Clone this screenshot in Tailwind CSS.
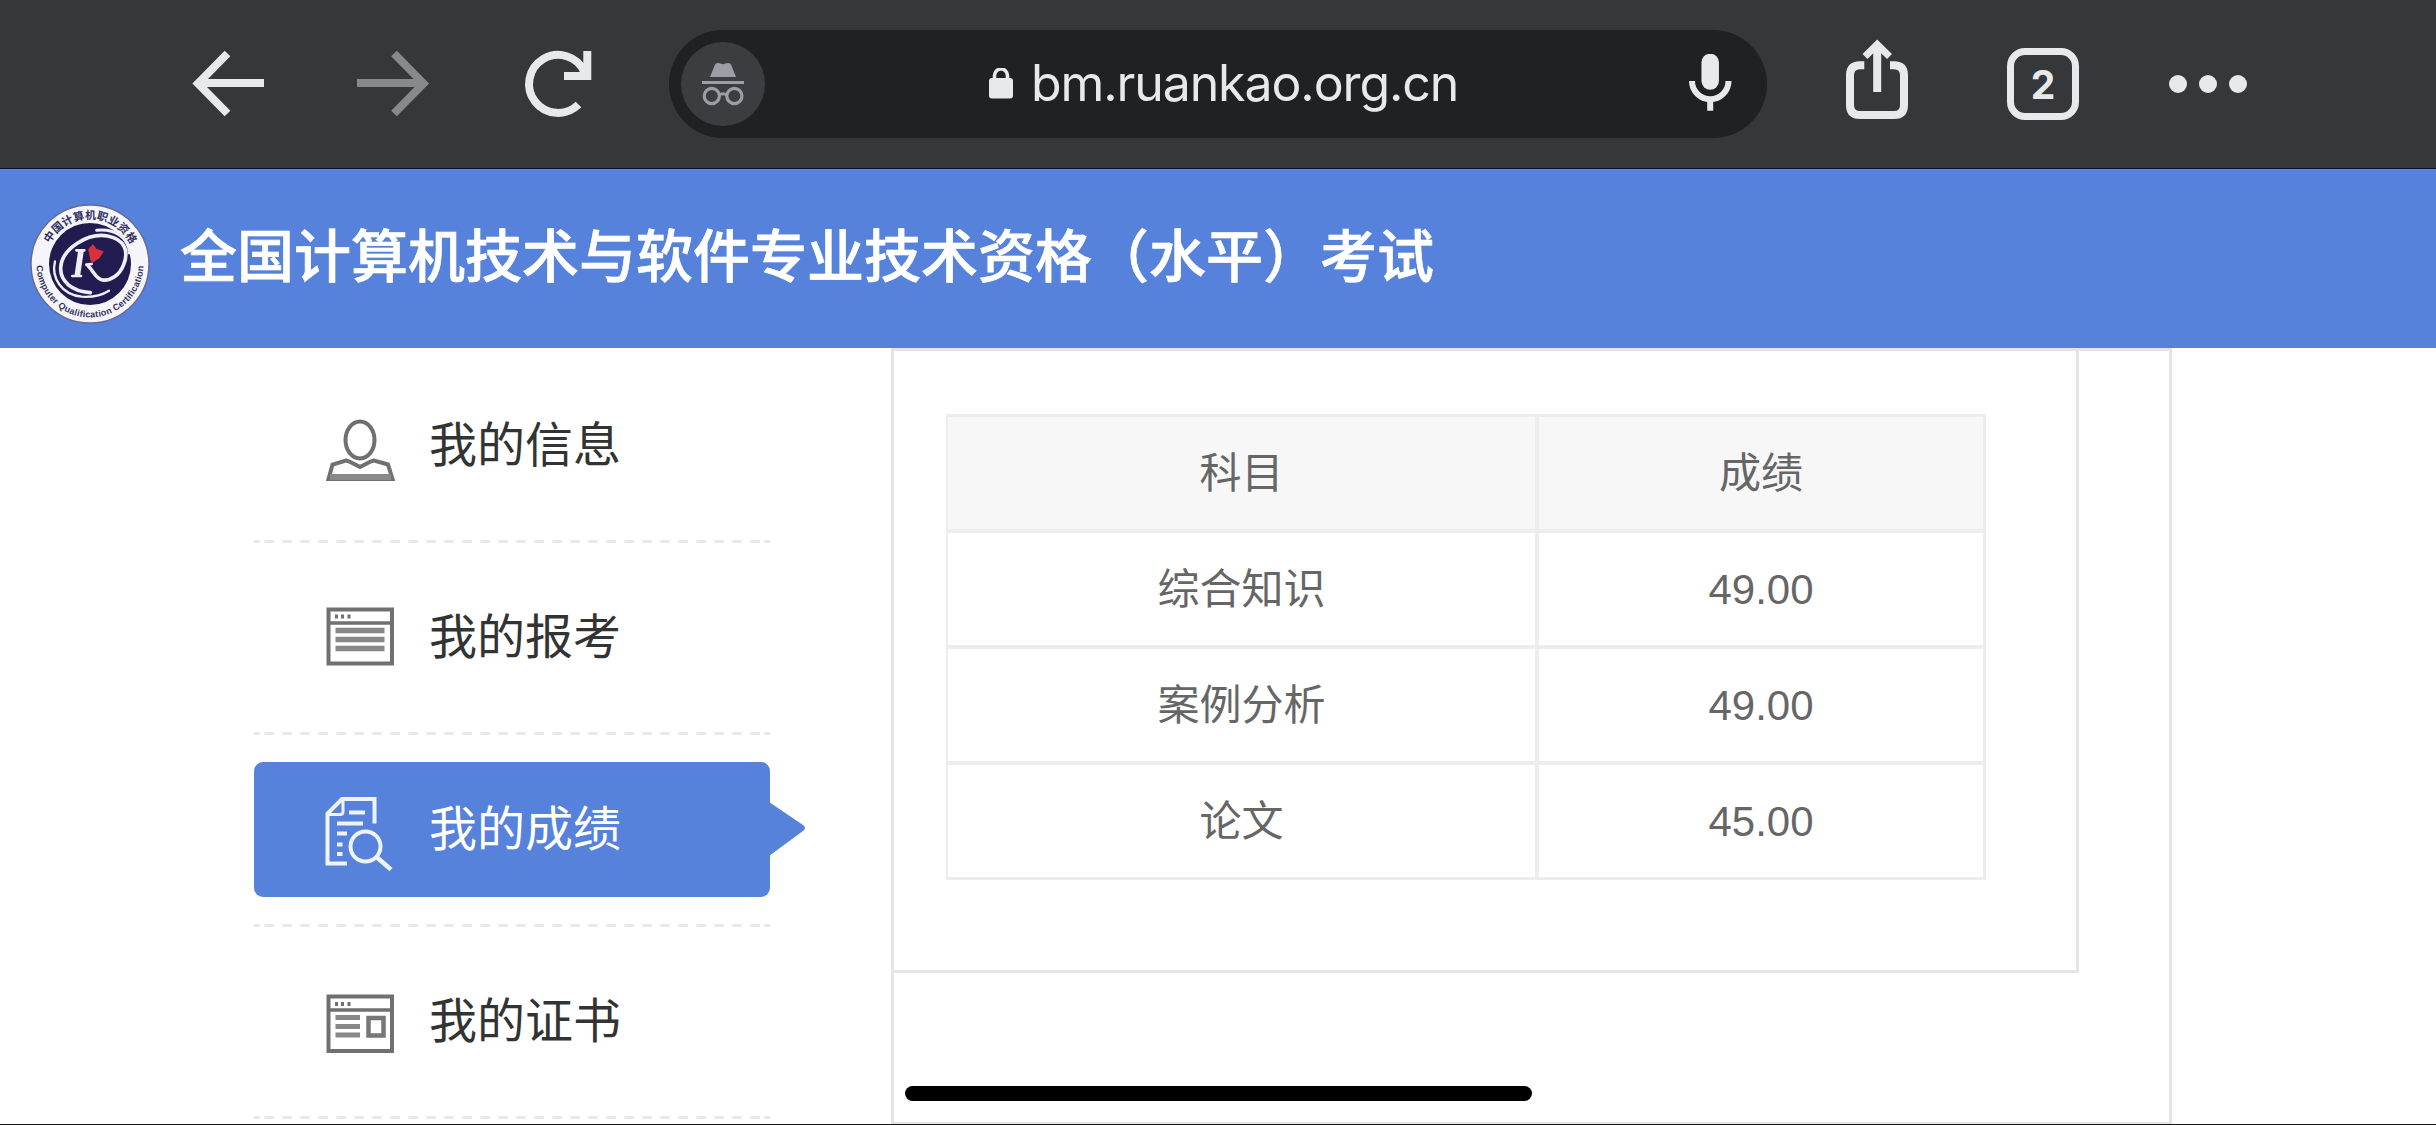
<!DOCTYPE html>
<html lang="zh-CN">
<head>
<meta charset="utf-8">
<title>我的成绩</title>
<script src="https://cdn.jsdelivr.net/npm/@tailwindcss/browser@4"></script>
</head>
<body class="w-[2436px] h-[1125px] overflow-hidden bg-white font-['Liberation_Sans','Noto_Sans_CJK_SC',sans-serif]">
<div class="relative flex h-[1125px] flex-col border-b border-[#161616]">

  <!-- browser toolbar -->
  <div class="flex h-[169px] shrink-0 items-start border-b border-[#0a1030] bg-[#36373a] text-[#e8e9ed]">
    <svg class="ml-[188px] mt-[44px] h-20 w-20" viewBox="188 44 80 80" fill="none" stroke="currentColor" stroke-width="8"><path d="M264 83H198M227.500 53.500L198 83.500L227.500 113.500"/></svg>
    <svg class="ml-[84px] mt-[44px] h-20 w-20 text-[#88898c]" viewBox="352 44 80 80" fill="none" stroke="currentColor" stroke-width="8"><path d="M357 83H423.500M394 53.500L423.500 83.500L394 113.500"/></svg>
    <svg class="ml-[88px] mt-[44px] h-20 w-20" viewBox="520 44 80 80" fill="none" stroke="currentColor" stroke-width="8"><path d="M578.500 104.500A29 29 0 1 1 584.500 72"/><path d="M587.300 51V76H564"/></svg>

    <div class="ml-[69px] mt-[30px] flex h-[108px] w-[1098px] items-center rounded-full bg-[#202124]">
      <div class="ml-3 flex size-[84px] items-center justify-center rounded-full bg-[#3c3d40] text-[#9b9ea4]">
        <svg class="size-[84px]" viewBox="681 42 84 84" fill="currentColor"><path d="M710 77L715 64.500Q716 62.500 718.500 63L723 64.300L727.500 63Q730 62.500 731 64.500L736 77Z"/><path d="M702 81H744V84H702Z"/><g fill="none" stroke="currentColor" stroke-width="3.200"><circle cx="711.800" cy="96" r="7.600"/><circle cx="734.400" cy="96" r="7.600"/><path d="M719 95Q723 92.500 727 95"/></g></svg>
      </div>
      <svg class="ml-[221px] h-8 w-7" viewBox="986 67 28 32"><rect x="989" y="77" width="24" height="20.500" rx="3" fill="currentColor"/><path d="M994.500 79V74.500A6.500 6.500 0 0 1 1007.500 74.500V79" fill="none" stroke="currentColor" stroke-width="3.600"/></svg>
      <div class="mb-[3px] ml-[17px] w-[440px] whitespace-nowrap font-['Inter',sans-serif] text-[50px] leading-[60px] tracking-[-1.1px]">bm.ruankao.org.cn</div>
      <svg class="ml-[215px] h-[60px] w-12" viewBox="1686 54 48 60" fill="none" stroke="currentColor"><path d="M1710.200 62.500V81" stroke-width="17.500" stroke-linecap="round"/><path d="M1692 81A18 18 0 0 0 1728.500 81M1710.200 99V110.700" stroke-width="6"/></svg>
    </div>

    <svg class="ml-[75px] mt-[36px] h-[88px] w-[70px]" viewBox="1842 36 70 88" fill="none" stroke="currentColor" stroke-width="8"><path d="M1864.300 65.300H1860Q1850 65.300 1850 75.300V105Q1850 115 1860 115H1894Q1904 115 1904 105V75.300Q1904 65.300 1894 65.300H1890M1877.200 92V44"/><path d="M1865 56.500L1877.200 44.500L1889.500 56.500" stroke-width="7"/></svg>
    <div class="ml-[95px] mt-[48px] flex size-[72px] items-center justify-center rounded-[18px] border-[7.5px] border-current font-['Inter',sans-serif] text-[39px] font-bold leading-none">2</div>
    <div class="ml-[90px] mt-[75px] flex gap-3">
      <i class="size-[18px] rounded-full bg-current"></i><i class="size-[18px] rounded-full bg-current"></i><i class="size-[18px] rounded-full bg-current"></i>
    </div>
  </div>

  <!-- site header -->
  <header class="flex h-[179px] shrink-0 items-start border-t border-[#6a86cf] bg-[#5782db]">
    <svg class="ml-[30px] mt-[33px] size-[122px]" viewBox="30 203 122 122">
      <defs><path id="arcTop" d="M45 264A45 45 0 0 1 135 264"/><path id="arcBottom" d="M36.500 264A53.500 53.500 0 0 0 143.500 264"/></defs>
      <circle cx="90" cy="264" r="59" fill="#f6f6fa" stroke="#686a96" stroke-width="1.500"/>
      <circle cx="90" cy="264" r="41" fill="#211c50"/>
      <text class="font-['Noto_Sans_CJK_SC',sans-serif] font-bold" font-size="11" fill="#33305f"><textPath href="#arcTop" startOffset="15%" textLength="100">中国计算机职业资格</textPath></text>
      <text class="font-['Liberation_Sans',sans-serif] font-bold" font-size="9" fill="#33305f"><textPath href="#arcBottom" startOffset="1%" textLength="164">Computer Qualification Certification</textPath></text>
      <g transform="translate(25 198) scale(.3333)" fill="none" stroke="#eeeef6" stroke-linecap="round">
        <path d="M196 284C140 280 106 250 107 210C110 150 190 104 248 114C300 124 312 160 296 200C284 232 256 250 232 246C212 242 206 220 190 204" stroke-width="11"/>
        <path d="M215 97C270 92 312 118 313 165" stroke-width="9"/>
        <path d="M90 190C78 240 110 290 170 296C200 298 230 292 252 278" stroke-width="7"/>
        <path d="M168 158L157 232" stroke-width="17" stroke-linecap="butt"/>
        <path d="M154 157H178M142 234H168" stroke-width="8"/>
        <path d="M184 200L200 198" stroke-width="8"/>
        <path d="M190 153L204 138L214 152L236 160L224 180L200 196L194 178Z" fill="#d8303c" stroke="none"/>
      </g>
    </svg>
    <h1 class="ml-[28px] mt-[40px] whitespace-nowrap font-['Noto_Sans_CJK_SC',sans-serif] text-[57px] font-medium leading-[84px] text-white [-webkit-text-stroke:0.7px_white]">全国计算机技术与软件专业技术资格（水平）考试</h1>
  </header>

  <main class="flex min-h-0 grow">
    <!-- side menu -->
    <nav class="ml-[254px] flex w-[516px] flex-col text-[48px] text-[#333]">
      <a class="flex h-[195px] shrink-0 flex-col">
        <span class="mt-[30px] flex h-[135px] items-center">
          <svg class="ml-[66px] h-[84px] w-20" viewBox="320 403.500 80 84" fill="none" stroke="#707070" stroke-width="4"><ellipse cx="360" cy="439.500" rx="14.500" ry="18.500"/><path d="M328.500 478.500L332.500 464L346 460Q349 460.500 360 466.500Q371 460.500 374 460L388 464L392.500 478.500Z"/><path d="M330 476.500H391" stroke="#8a8a8a" stroke-width="6"/></svg>
          <span class="ml-[29px] leading-[70px]">我的信息</span>
        </span>
        <svg class="mt-[27px] h-[3px] w-[516px] shrink-0" viewBox="0 0 516 3"><path d="M0 1.500H5.500M510.500 1.500H516" stroke="#e8e8e8" stroke-width="3"/><path d="M10.300 1.500H507" stroke="#e8e8e8" stroke-width="3" stroke-dasharray="9.500 8.500"/></svg>
      </a>
      <a class="flex h-[192px] shrink-0 flex-col">
        <span class="mt-[27px] flex h-[135px] items-center">
          <svg class="ml-[66px] h-[84px] w-20" viewBox="320 595.500 80 84" fill="none" stroke="#707070" stroke-width="4"><path d="M328.500 609H392V663H328.500Z"/><path d="M328 622.500H393" stroke-width="3.500"/><path d="M335 616H338M341 616H344M347.500 616H350.500"/><path d="M335.500 630H384.500M335.500 639H384.500M335.500 648H384.500" stroke="#888" stroke-width="5.500"/></svg>
          <span class="ml-[29px] leading-[70px]">我的报考</span>
        </span>
        <svg class="mt-[27px] h-[3px] w-[516px] shrink-0" viewBox="0 0 516 3"><path d="M0 1.500H5.500M510.500 1.500H516" stroke="#e8e8e8" stroke-width="3"/><path d="M10.300 1.500H507" stroke="#e8e8e8" stroke-width="3" stroke-dasharray="9.500 8.500"/></svg>
      </a>
      <a class="flex h-[192px] shrink-0 flex-col">
        <span class="relative mt-[27px] flex h-[135px] items-center rounded-[9px] bg-[#5782db] text-white">
          <svg class="ml-[66px] h-[84px] w-20" viewBox="320 787.500 80 84" fill="none" stroke="#eef3ff" stroke-width="4"><path d="M347 863H327.500V813L342 798.500H374.500V823"/><path d="M328 814H340Q343 814 343 811V799" stroke-width="3"/><path d="M349 812H365M337 823H363M337 833H347M337 844H342.500M337 853.500H342.500"/><circle cx="365.500" cy="846" r="15"/><path d="M376.500 856.500L391 869" stroke-width="4.500"/></svg>
          <span class="ml-[29px] leading-[70px]">我的成绩</span>
          <svg class="absolute left-[515px] top-[40px] h-[54px] w-[37px]" viewBox="0 0 37 54"><path d="M0 0L34 23Q38 26 34 29L0 54Z" fill="#5782db"/></svg>
        </span>
        <svg class="mt-[27px] h-[3px] w-[516px] shrink-0" viewBox="0 0 516 3"><path d="M0 1.500H5.500M510.500 1.500H516" stroke="#e8e8e8" stroke-width="3"/><path d="M10.300 1.500H507" stroke="#e8e8e8" stroke-width="3" stroke-dasharray="9.500 8.500"/></svg>
      </a>
      <a class="flex h-[192px] shrink-0 flex-col">
        <span class="mt-[27px] flex h-[135px] items-center">
          <svg class="ml-[66px] h-[84px] w-20" viewBox="320 979.500 80 84" fill="none" stroke="#707070" stroke-width="4"><path d="M328.500 996H392V1050.500H328.500Z"/><path d="M328 1009.500H393" stroke-width="3.500"/><path d="M335 1003.500H338M341 1003.500H344M347.500 1003.500H350.500"/><path d="M335.500 1017H360M335.500 1026H360M335.500 1034.500H360" stroke="#888" stroke-width="5"/><path d="M368.500 1017.500H383.500V1035H368.500Z" stroke="#777" stroke-width="4.500"/></svg>
          <span class="ml-[29px] leading-[70px]">我的证书</span>
        </span>
        <svg class="mt-[27px] h-[3px] w-[516px] shrink-0" viewBox="0 0 516 3"><path d="M0 1.500H5.500M510.500 1.500H516" stroke="#e8e8e8" stroke-width="3"/><path d="M10.300 1.500H507" stroke="#e8e8e8" stroke-width="3" stroke-dasharray="9.500 8.500"/></svg>
      </a>
    </nav>

    <!-- results -->
    <section class="ml-[121px] h-[776px] w-[1281px] border-x-[3px] border-y-[3px] border-b-2 border-[#e5e5e5]">
      <div class="h-[622px] w-[1185px] border-b-[3px] border-r-[3px] border-[#e5e5e5] pl-[52px] pt-[63px]">
        <div class="grid w-[1040px] grid-cols-[587px_444px] grid-rows-[repeat(4,112px)] gap-1 bg-[#ededed] p-[3px] pl-[2px] text-[42px] text-[#666] *:flex *:items-center *:justify-center *:bg-white *:pt-[2px] *:leading-[60px]">
          <div class="bg-[#f7f7f7]!">科目</div><div class="bg-[#f7f7f7]!">成绩</div>
          <div>综合知识</div><div>49.00</div>
          <div>案例分析</div><div>49.00</div>
          <div>论文</div><div>45.00</div>
        </div>
      </div>
    </section>
  </main>

  <!-- home indicator -->
  <div class="absolute left-[905px] top-[1086px] h-[15px] w-[627px] rounded-full bg-black"></div>
</div>
</body>
</html>
